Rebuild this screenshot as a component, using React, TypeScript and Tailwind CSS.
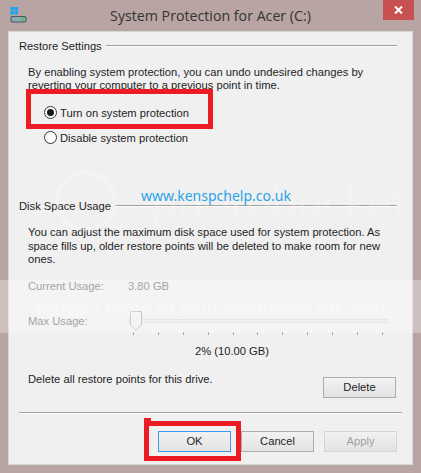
import React from 'react';

const font = { fontFamily: '"Liberation Sans", Arial, sans-serif' };

const Radio = ({ checked, label }: { checked?: boolean; label: string }) => (
  <div className="flex h-[25px] items-center pl-[35px]">
    <span className="flex h-[13px] w-[13px] items-center justify-center rounded-full border border-[#333] bg-white">
      {checked && <span className="h-[7px] w-[7px] rounded-full bg-[#1a1a1a]" />}
    </span>
    <span className="ml-[3px]">{label}</span>
  </div>
);

const GroupHeader = ({ title }: { title: string }) => (
  <div className="flex h-[16px] items-center pl-[10px] pr-[15px]">
    <span>{title}</span>
    <span className="ml-[4px] h-[2px] flex-1 border-t border-b border-t-[#a0a0a0] border-b-white" />
  </div>
);

const Button = ({ label, focused, disabled }: { label: string; focused?: boolean; disabled?: boolean }) => (
  <div
    className={`flex h-[21px] w-[73px] items-center justify-center border bg-gradient-to-b from-[#f2f2f2] to-[#e3e3e3] ${
      focused ? 'border-[#3c9ae8]' : disabled ? 'border-[#d5d5d5] text-[#a0a0a0]' : 'border-[#adadad]'
    }`}
  >
    {label}
  </div>
);

export default function App() {
  const ticks = Array.from({ length: 11 }, (_, i) => i);
  return (
    <div className="relative h-[473px] w-[421px] overflow-hidden bg-[#b8a4a2] text-[11.2px] leading-[14px] text-[#1e1e1e]" style={font}>
      {/* title bar */}
      <div className="relative flex h-[31px] items-center justify-center">
        <svg className="absolute left-[10px] top-[7px]" width="17" height="17" viewBox="0 0 17 17">
          <rect x="0.5" y="0" width="3.5" height="3.5" fill="#1aa3f0" />
          <rect x="4.5" y="0" width="3.5" height="3.5" fill="#1aa3f0" />
          <rect x="0.5" y="4" width="3.5" height="3.5" fill="#1aa3f0" />
          <rect x="4.5" y="4" width="3.5" height="3.5" fill="#1aa3f0" />
          <rect x="0.5" y="9" width="16" height="6.5" rx="2" fill="#3f5a66" />
          <rect x="1.5" y="10" width="14" height="4.5" rx="1.5" fill="#8fa9b2" />
          <rect x="11.5" y="10.5" width="2" height="3.5" fill="#4cc53a" />
        </svg>
        <span className="text-[14.2px] text-[#333]" style={{ fontFamily: '"Open Sans", sans-serif' }}>
          System Protection for Acer (C:)
        </span>
        <div className="absolute right-[7px] top-0 flex h-[20px] w-[31px] items-center justify-center bg-[#c75050]">
          <svg width="9" height="8" viewBox="0 0 9 8">
            <path d="M1 0.5 L8 7.5 M8 0.5 L1 7.5" stroke="white" strokeWidth="2" />
          </svg>
        </div>
      </div>

      {/* client area */}
      <div className="mx-[8px] flex h-[434px] flex-col border border-[#d6d6d6] bg-[#f0f0f0] pt-[6px]">
        <GroupHeader title="Restore Settings" />
        <div className="mt-[12px] pl-[19px] leading-[13px]">
          By enabling system protection, you can undo undesired changes by
          <br />
          reverting your computer to a previous point in time.
        </div>
        <div className="mt-[8px]">
          <Radio checked label="Turn on system protection" />
          <Radio label="Disable system protection" />
        </div>

        <div className="mt-[48px]">
          <GroupHeader title="Disk Space Usage" />
        </div>
        <div className="mt-[12px] pl-[19px] leading-[13.5px]">
          You can adjust the maximum disk space used for system protection. As
          <br />
          space fills up, older restore points will be deleted to make room for new
          <br />
          ones.
        </div>

        <div className="mt-[11px] flex h-[16px] items-center pl-[19px] text-[#7a7a7a]">
          <span className="w-[100px]">Current Usage:</span>
          <span>3.80 GB</span>
        </div>
        <div className="mt-[17px] flex h-[20px] items-center pl-[19px] text-[#7a7a7a]">
          <span className="w-[100px]">Max Usage:</span>
          <div className="relative h-[20px] w-[260px]">
            <div className="absolute left-0 right-0 top-[8px] h-[4px] border border-[#dcdcdc] bg-[#ebebeb]" />
            <svg className="absolute left-[2px] top-0" width="12" height="20" viewBox="0 0 12 20">
              <path d="M0.5 0.5 H11.5 V13.5 L6 19.5 L0.5 13.5 Z" fill="#f0f0f0" stroke="#b4b4b4" />
            </svg>
          </div>
        </div>
        <div className="ml-[124px] mt-[1px] flex w-[250px] justify-between">
          {ticks.map((t) => (
            <span key={t} className="h-[3px] w-px bg-[#a0a0a0]" />
          ))}
        </div>
        <div className="mt-[8px] flex h-[16px] items-center pl-[186px]">2% (10.00 GB)</div>

        <div className="mt-[13px] flex items-start pl-[19px] pr-[16px]">
          <span className="flex-1">Delete all restore points for this drive.</span>
          <div className="mt-[5px]">
            <Button label="Delete" />
          </div>
        </div>

        <div className="mx-[10px] mt-[14px] h-[2px] border-t border-b border-t-[#a0a0a0] border-b-white" />

        <div className="mt-[17px] flex gap-[10px] pl-[149px]">
          <Button label="OK" focused />
          <Button label="Cancel" />
          <Button label="Apply" disabled />
        </div>
      </div>

      {/* photobucket watermarks */}
      <div className="pointer-events-none absolute left-[55px] top-[170px] h-[62px] w-[62px] rounded-full border-[5px] border-white/20" />
      <div
        className="pointer-events-none absolute left-[152px] top-[176px] text-[46px] leading-[50px] text-white/20"
        style={{ fontFamily: 'Lato, sans-serif' }}
      >
        photobucket
      </div>
      <div className="pointer-events-none absolute left-0 top-[280px] flex h-[53px] w-full items-center justify-center bg-white/30">
        <span className="text-[20px] font-bold text-white/30" style={{ fontFamily: 'Lato, sans-serif' }}>
          Protect more of your memories for less!
        </span>
      </div>
      <div className="pointer-events-none absolute left-[141px] top-[189px] text-[14px] text-[#2ba3e6]" style={{ fontFamily: '"Noto Sans", sans-serif' }}>
        www.kenspchelp.co.uk
      </div>

      {/* red highlight boxes */}
      <div className="pointer-events-none absolute left-[26px] top-[89px] h-[40px] w-[187px] border-[5px] border-[#ed1c24]" />
      <div className="pointer-events-none absolute left-[144px] top-[421px] h-[40px] w-[97px] border-[5px] border-[#ed1c24]" />
      <div className="pointer-events-none absolute left-[144px] top-[418px] h-[4px] w-[7px] bg-[#ed1c24]" />
    </div>
  );
}
